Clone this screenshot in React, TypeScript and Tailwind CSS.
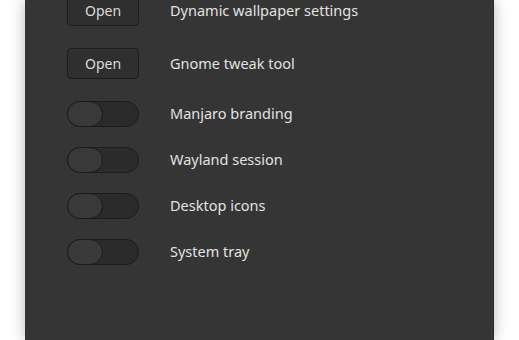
import React from 'react';

const font = { fontFamily: '"Noto Sans", "Open Sans", sans-serif' };

function OpenButton() {
  return (
    <button className="w-[72px] h-[31px] rounded-[4px] border border-[#1c1c1c] bg-[#2f2f2f] text-[14px] text-[#dcdcdc] shadow-[inset_0_1px_0_rgba(255,255,255,0.03)]">
      Open
    </button>
  );
}

function Toggle() {
  return (
    <div className="w-[72px] h-[26px] rounded-full border border-[#1c1c1c] bg-[#2b2b2b] flex items-center">
      <div className="w-[36px] h-[26px] -ml-px rounded-full border border-[#1a1a1a] bg-[#393939]" />
    </div>
  );
}

function Row({ control, label, className }: { control: React.ReactNode; label: string; className?: string }) {
  return (
    <div className={`flex items-center ${className ?? ''}`}>
      <div className="w-[103px] shrink-0 flex">{control}</div>
      <span className="text-[14.5px] text-[#e2e2e2]">{label}</span>
    </div>
  );
}

export default function App() {
  return (
    <div className="w-[519px] h-[340px] bg-white overflow-hidden flex" style={font}>
      <div className="ml-[25px] w-[469px] h-full bg-[#353535] border-r border-[#2a2a2a] shadow-[0_0_14px_rgba(0,0,0,0.28)] pl-[42px]">
        <div className="flex flex-col -mt-[5px]">
          <Row control={<OpenButton />} label="Dynamic wallpaper settings" />
          <Row control={<OpenButton />} label="Gnome tweak tool" className="mt-[22px]" />
          <Row control={<Toggle />} label="Manjaro branding" className="mt-[22px]" />
          <Row control={<Toggle />} label="Wayland session" className="mt-[20px]" />
          <Row control={<Toggle />} label="Desktop icons" className="mt-[20px]" />
          <Row control={<Toggle />} label="System tray" className="mt-[20px]" />
        </div>
      </div>
    </div>
  );
}
